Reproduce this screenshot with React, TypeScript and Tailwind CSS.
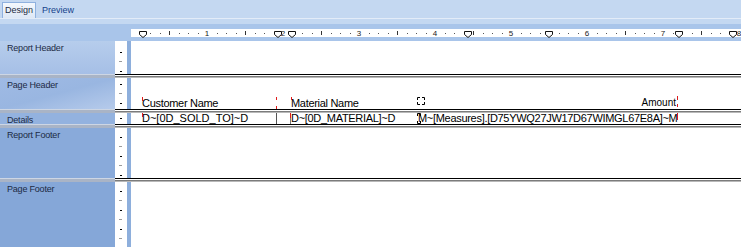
import React from "react";

const LABEL_W = "w-[115px]";

function HRuler() {
  const marks: React.ReactNode[] = [];
  for (let i = 1; i < 65; i++) {
    const x = i * 9.5;
    if (i % 8 === 0) {
      marks.push(
        <text key={i} x={x} y={7} fontSize={8} textAnchor="middle" fill="#222" fontFamily="Liberation Sans, Arial, sans-serif">
          {i / 8}
        </text>
      );
    } else if (i % 4 === 0) {
      marks.push(<rect key={i} x={Math.round(x)} y={2} width={1} height={4} fill="#333" />);
    } else {
      marks.push(<rect key={i} x={Math.round(x)} y={4} width={1} height={1} fill="#555" />);
    }
  }
  const stops = [12, 147, 161, 337, 418, 548, 602];
  return (
    <svg width={610} height={8} className="overflow-visible block">
      {marks}
      {stops.map((s) => (
        <path
          key={s}
          d={`M${s - 3.5} 2.5 H${s + 3.5} V5.5 L${s} 8.5 L${s - 3.5} 5.5 Z`}
          fill="#fff"
          stroke="#111"
          strokeWidth={1}
        />
      ))}
    </svg>
  );
}

function VRuler({ h, start = 9 }: { h: number; start?: number }) {
  const ticks: React.ReactNode[] = [];
  let k = 0;
  for (let y = start; y < h - 1; y += 9.4, k++) {
    const dark = k % 2 === 0;
    ticks.push(
      <rect key={k} x={dark ? 5 : 4} y={Math.round(y)} width={dark ? 2 : 3} height={1} fill={dark ? "#000" : "#9a9a9a"} />
    );
  }
  return (
    <svg width={12} height={h} className="block">
      {ticks}
    </svg>
  );
}

function Separator() {
  return (
    <div className="flex h-[4px]">
      <div className={`${LABEL_W} border-t border-[#cdd6e4] bg-[#a9b4c6]`} />
      <div className="flex-1 flex flex-col">
        <div className="h-px bg-black" />
        <div className="h-px bg-white" />
        <div className="h-px bg-[#7c7c7c]" />
        <div className="h-px bg-[#b8b8b8]" />
      </div>
    </div>
  );
}

function Section({
  label,
  h,
  bg,
  tickStart,
  children,
}: {
  label: string;
  h: number;
  bg: string;
  tickStart?: number;
  children?: React.ReactNode;
}) {
  return (
    <div className="flex" style={{ height: h }}>
      <div className={`${LABEL_W} ${bg} pl-[7px] pt-[2px] text-[9px] leading-[11px] tracking-[-0.2px] text-[#1c2a44]`}>
        {label}
      </div>
      <div className="w-[12px] bg-white">
        <VRuler h={h} start={tickStart} />
      </div>
      <div className="w-[4px] bg-[#8eafdc]" />
      <div className="flex-1 bg-white relative">{children}</div>
    </div>
  );
}

function Red({ className }: { className: string }) {
  return <span className={`absolute w-px bg-[#e01b1b] ${className}`} />;
}

function Corners({ w, h }: { w: number; h: number }) {
  return (
    <svg width={w} height={h} className="block">
      <path d={`M0.5 3 V0.5 H3 M${w - 3} 0.5 H${w - 0.5} V3 M0.5 ${h - 3} V${h - 0.5} H3 M${w - 3} ${h - 0.5} H${w - 0.5} V${h - 3}`} stroke="#000" strokeWidth={1} fill="none" />
    </svg>
  );
}

export default function App() {
  return (
    <div className="w-[741px] h-[251px] overflow-hidden bg-white font-['Liberation_Sans',Arial,sans-serif]">
      {/* tabs */}
      <div className="h-[18px] bg-[#c4d8f1] flex items-end pl-[2px] text-[9px]">
        <div className="h-[16px] w-[34px] border border-b-0 border-[#8fb1df] bg-gradient-to-b from-[#f4f8fd] to-[#dde8f6] text-[#1d2a3f] flex items-center justify-center pt-[1px]">
          Design
        </div>
        <div className="h-[16px] ml-[5px] px-[1px] text-[#15428b] flex items-center pt-[1px]">Preview</div>
      </div>
      <div className="h-px bg-[#e3ecf8]" />
      <div className="h-[5px] bg-[#c4d8f1]" />
      <div className="h-[17px] bg-[#a9c5ea] pt-[5px] pl-[131px]">
        <div className="h-[8px] bg-white">
          <HRuler />
        </div>
      </div>

      <Section label="Report Header" h={33} bg="bg-gradient-to-b from-[#b6cdec] to-[#a6bfe6]" tickStart={11} />
      <Separator />
      <Section label="Page Header" h={31} bg="bg-gradient-to-br from-[#9fbae4] via-[#99b6e1] to-[#b6cbeb]" tickStart={6}>
        <div className="flex pt-[19px] pl-[10px] text-[11px] leading-[12px] text-black">
          <div className="relative w-[136px] h-[12px] pl-[1px] tracking-[-0.3px]">
            Customer Name
            <Red className="left-px top-0 h-[4px]" />
            <Red className="right-0 top-0 h-[3px]" />
            <Red className="right-0 bottom-0 h-[3px]" />
          </div>
          <div className="relative ml-[13px] w-[127px] h-[12px] pl-[1px] tracking-[-0.3px]">
            Material Name
            <Red className="left-px top-0 h-[3px]" />
          </div>
          <div className="w-[8px] h-[8px]">
            <Corners w={8} h={8} />
          </div>
          <div className="relative w-[253px] h-[12px] text-right pr-[2px] text-[10px]">
            Amount
            <Red className="right-0 -top-px h-[4px]" />
            <Red className="right-0 bottom-[2px] h-[3px]" />
          </div>
        </div>
      </Section>
      <Separator />
      <Section label="Details" h={11} bg="bg-[#93b2df]" tickStart={5}>
        <div className="flex pl-[10px] text-[11px] leading-[11px] text-black h-[11px]">
          <div className="relative w-[136px] border-r border-[#555] pl-[1px]">
            D~[0D_SOLD_TO]~D
            <Red className="left-px top-0 h-[4px]" />
          </div>
          <div className="relative ml-[13px] w-[127px] border-l border-[#777] tracking-[-0.3px]">
            D~[0D_MATERIAL]~D
            <Red className="-left-px top-0 h-[5px]" />
          </div>
          <div className="relative w-[261px] tracking-[-0.3px] pl-[1px]">
            <span className="absolute left-0 top-0">
              <Corners w={4} h={11} />
            </span>
            M~[Measures].[D75YWQ27JW17D67WIMGL67E8A]~M
            <Red className="right-0 top-0 h-[7px]" />
          </div>
        </div>
      </Section>
      <Separator />
      <Section label="Report Footer" h={50} bg="bg-[#89aada]" />
      <Separator />
      <Section label="Page Footer" h={65} bg="bg-[#85a7d8]" />
    </div>
  );
}
